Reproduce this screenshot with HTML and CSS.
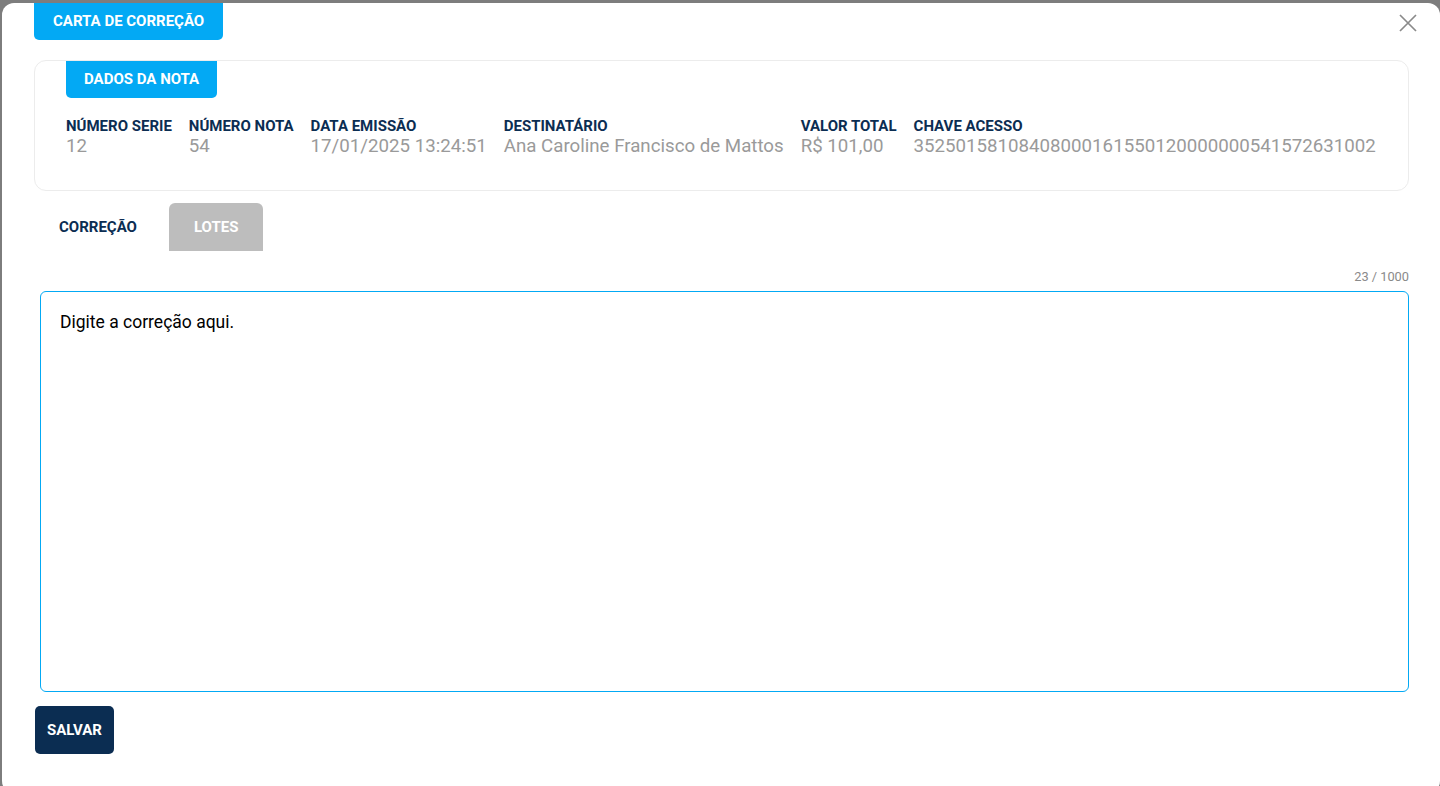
FILE: index.html
```html
<!DOCTYPE html>
<html lang="pt-BR">
<head>
    <meta charset="UTF-8">
    <title>Carta de Correção</title>
    <link rel="stylesheet" href="styles.css">
</head>
<body>
    <div class="modal">
        <!-- Header -->
        <div class="modal-header">
            <div class="title-tab">Carta de Correção</div>
            <button class="close-btn" aria-label="Fechar">
                <svg width="18" height="18" viewBox="0 0 18 18">
                    <path d="M1 1 L17 17 M17 1 L1 17" stroke="#8a8a8a" stroke-width="1.7" fill="none"/>
                </svg>
            </button>
        </div>

        <!-- Dados da nota -->
        <div class="card">
            <div class="card-tab">Dados da Nota</div>
            <div class="fields">
                <div class="field">
                    <div class="field-label">Número Serie</div>
                    <div class="field-value">12</div>
                </div>
                <div class="field">
                    <div class="field-label">Número Nota</div>
                    <div class="field-value">54</div>
                </div>
                <div class="field">
                    <div class="field-label">Data Emissão</div>
                    <div class="field-value">17/01/2025 13:24:51</div>
                </div>
                <div class="field">
                    <div class="field-label">Destinatário</div>
                    <div class="field-value">Ana Caroline Francisco de Mattos</div>
                </div>
                <div class="field">
                    <div class="field-label">Valor Total</div>
                    <div class="field-value">R$ 101,00</div>
                </div>
                <div class="field">
                    <div class="field-label">Chave Acesso</div>
                    <div class="field-value">35250158108408000161550120000000541572631002</div>
                </div>
            </div>
        </div>

        <!-- Tabs -->
        <div class="tabs">
            <div class="tab active">Correção</div>
            <div class="tab">Lotes</div>
        </div>

        <div class="counter">23 / 1000</div>
        <textarea class="correction" placeholder="Digite a correção aqui.">Digite a correção aqui.</textarea>

        <button class="save-btn">Salvar</button>
    </div>
</body>
</html>
```

FILE: styles.css
```css
:root {
    --blue: #03a9f4;
    --navy: #0b2d52;
    --gray-text: #9a9a9a;
    --tab-gray: #bdbdbd;
}

* {
    box-sizing: border-box;
}

body {
    margin: 0;
    background-color: #7d7d7d;
    font-family: Roboto, 'Liberation Sans', sans-serif;
    height: 786px;
    overflow: hidden;
}

.modal {
    position: relative;
    margin: 3px 0 0 2px;
    width: 1438px;
    height: 790px;
    background-color: #ffffff;
    border-radius: 12px;
    padding: 0 31px 0 32px;
}

.modal-header {
    display: flex;
    align-items: flex-start;
}

.title-tab,
.card-tab {
    background-color: var(--blue);
    color: #ffffff;
    font-size: 15px;
    font-weight: bold;
    text-transform: uppercase;
    height: 37px;
    line-height: 37px;
    padding: 0 19px;
    border-radius: 0 0 5px 5px;
}

.close-btn {
    position: absolute;
    top: 11px;
    right: 23px;
    background: none;
    border: none;
    padding: 0;
    cursor: pointer;
}

.card {
    margin-top: 20px;
    border: 1px solid #ececec;
    border-radius: 12px;
    height: 131px;
    padding: 0 31px;
}

.card-tab {
    display: inline-block;
    padding: 0 18px;
}

.fields {
    display: flex;
    gap: 17px;
    margin-top: 20px;
}

.field-label {
    color: var(--navy);
    font-size: 15px;
    font-weight: bold;
    text-transform: uppercase;
    line-height: 17px;
}

.field-value {
    color: var(--gray-text);
    font-size: 18.7px;
    line-height: 22px;
}

.tabs {
    display: flex;
    gap: 7px;
    margin-top: 12px;
}

.tab {
    height: 48px;
    line-height: 48px;
    padding: 0 25px;
    font-size: 15px;
    font-weight: bold;
    text-transform: uppercase;
    color: #ffffff;
    background-color: var(--tab-gray);
    border-radius: 6px 6px 0 0;
}

.tab.active {
    background-color: transparent;
    color: var(--navy);
}

.counter {
    text-align: right;
    font-size: 12.8px;
    color: #8a8a8a;
    margin-top: 19px;
    line-height: 14px;
}

.correction {
    display: block;
    margin: 7px 0 0 6px;
    width: calc(100% - 6px);
    height: 401px;
    border: 1px solid var(--blue);
    border-radius: 6px;
    padding: 20px 19px;
    font-family: Roboto, 'Liberation Sans', sans-serif;
    font-size: 17.5px;
    line-height: 20px;
    color: #000000;
    resize: none;
    outline: none;
}

.save-btn {
    display: block;
    margin-top: 14px;
    margin-left: 1px;
    height: 48px;
    padding: 0 12px;
    background-color: var(--navy);
    color: #ffffff;
    border: none;
    border-radius: 5px;
    font-family: Roboto, 'Liberation Sans', sans-serif;
    font-size: 15px;
    font-weight: bold;
    text-transform: uppercase;
    cursor: pointer;
}
```
